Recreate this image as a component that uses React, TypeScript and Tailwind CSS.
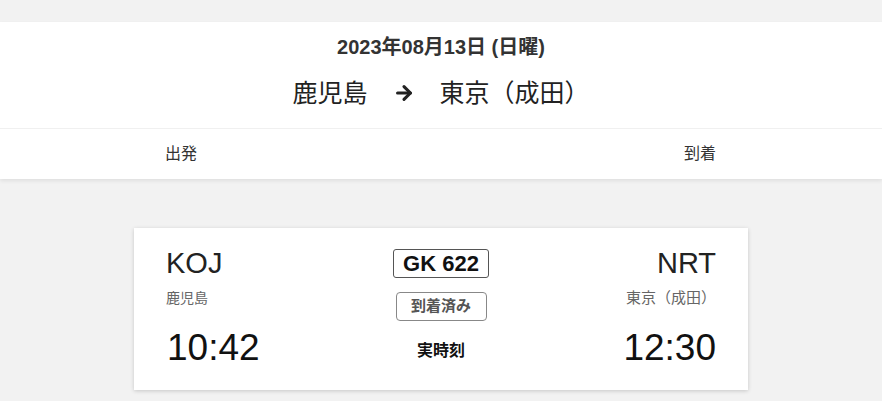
import { ArrowRight } from "lucide-react";

const font = "font-['Liberation_Sans','Noto_Sans_CJK_JP',sans-serif]";

export default function App() {
  return (
    <div className={`min-h-screen bg-[#f2f2f2] pt-[22px] ${font}`}>
      {/* header */}
      <div className="bg-white shadow-[0_2px_4px_rgba(0,0,0,0.08)]">
        <div className="h-[106px] flex flex-col items-center pt-[13px]">
          <div className="text-[20px] leading-6 font-bold text-[#333]">
            2023年08月13日 (日曜)
          </div>
          <div className="mt-[18px] flex items-center text-[25px] leading-8 text-[#222]">
            <span>鹿児島</span>
            <ArrowRight className="mx-[25px] w-[22px] h-[22px]" strokeWidth={3.4} />
            <span>東京（成田）</span>
          </div>
        </div>
        <div className="border-t border-[#f0f0f0]">
          <div className="max-w-[614px] mx-auto px-8 h-[50px] flex items-center justify-between text-[16px] text-[#333]">
            <span className="-ml-px">出発</span>
            <span>到着</span>
          </div>
        </div>
      </div>

      {/* flight card */}
      <div className="mt-[49px] w-[614px] mx-auto bg-white h-[162px] px-8 flex shadow-[0_1px_4px_rgba(0,0,0,0.18)]">
        <div className="flex-1 flex flex-col items-start pt-[19px]">
          <div className="text-[29px] leading-8 text-[#222]">KOJ</div>
          <div className="mt-[9px] text-[14px] leading-5 text-[#666]">鹿児島</div>
          <div className="mt-[20px] text-[37px] leading-10 text-[#111] pl-[1px]">10:42</div>
        </div>
        <div className="flex flex-col items-center pt-[21px]">
          <div className="h-[29px] px-[9px] flex items-center border border-[#555] rounded-[3px] text-[22px] font-bold text-[#111]">
            GK 622
          </div>
          <div className="mt-[14px] h-[29px] w-[91px] flex items-center justify-center border border-[#888] rounded-[4px] text-[15px] font-bold text-[#555]">
            到着済み
          </div>
          <div className="mt-[18px] text-[16px] leading-6 font-bold text-[#111]">実時刻</div>
        </div>
        <div className="flex-1 flex flex-col items-end pt-[19px]">
          <div className="text-[29px] leading-8 text-[#222]">NRT</div>
          <div className="mt-[9px] text-[15px] leading-5 text-[#666]">東京（成田）</div>
          <div className="mt-[20px] text-[37px] leading-10 text-[#111]">12:30</div>
        </div>
      </div>
    </div>
  );
}
